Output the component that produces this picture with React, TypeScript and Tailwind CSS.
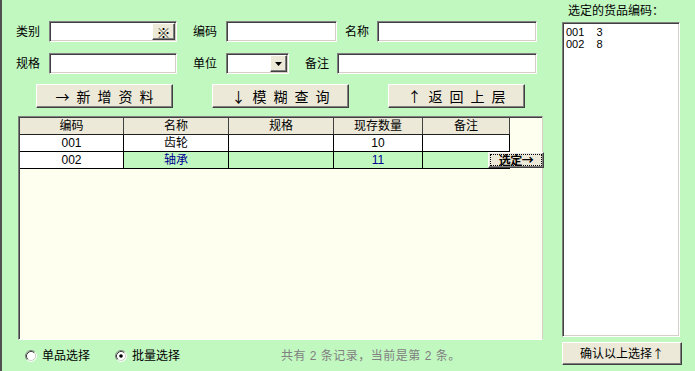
import React from "react";

const sunken =
  "border border-t-[#808080] border-l-[#808080] border-r-white border-b-white shadow-[inset_1px_1px_0_#404040,inset_-1px_-1px_0_#d4d0c8] bg-white";
const raised =
  "border border-t-white border-l-white border-r-[#404040] border-b-[#404040] shadow-[inset_-1px_-1px_0_#808080,inset_1px_1px_0_#ece9d8] bg-[#ece9d8]";
const cjk = "font-['Noto_Sans_CJK_SC',sans-serif]";

function Radio({ checked }: { checked?: boolean }) {
  return (
    <svg width="12" height="12" viewBox="0 0 12 12" className="shrink-0">
      <circle cx="6" cy="6" r="4.5" fill="white" />
      <path d="M2.11 9.89 A5.5 5.5 0 0 1 9.89 2.11" fill="none" stroke="#808080" />
      <path d="M9.89 2.11 A5.5 5.5 0 0 1 2.11 9.89" fill="none" stroke="#ffffff" />
      <path d="M2.82 9.18 A4.5 4.5 0 0 1 9.18 2.82" fill="none" stroke="#404040" />
      <path d="M9.18 2.82 A4.5 4.5 0 0 1 2.82 9.18" fill="none" stroke="#d4d0c8" />
      {checked && <circle cx="6" cy="6" r="1.8" fill="black" />}
    </svg>
  );
}

function BigButton({ chars, w }: { chars: string[]; w: string }) {
  return (
    <div className={`${raised} ${w} h-[24px] flex items-center justify-center gap-[7px] text-[14px] text-black ${cjk}`}>
      {chars.map((c, i) => (
        <span key={i} className="leading-none">
          {c}
        </span>
      ))}
    </div>
  );
}

const cols = [
  { name: "编码", w: "w-[104px]" },
  { name: "名称", w: "w-[105px]" },
  { name: "规格", w: "w-[105px]" },
  { name: "现存数量", w: "w-[89px]" },
  { name: "备注", w: "w-[87px]" },
];

const rows = [
  { cells: ["001", "齿轮", "", "10", ""], sel: false },
  { cells: ["002", "轴承", "", "11", ""], sel: true },
];

export default function App() {
  return (
    <div className="w-[695px] h-[371px] bg-[#c0f8c0] border-l-2 border-[#505050] flex text-[12px] text-black font-['Liberation_Sans','Noto_Sans_CJK_SC',sans-serif] overflow-hidden">
      {/* left column */}
      <div className="w-[560px] flex flex-col pt-[21px]">
        {/* row 1 */}
        <div className="flex items-center h-[21px] pl-[14px]">
          <span className="w-[33px]">类别</span>
          <div className={`${sunken} w-[128px] h-[21px] flex justify-end items-stretch p-[1px]`}>
            <div className={`${raised} w-[23px] flex items-center justify-center text-[14px] leading-none ${cjk}`}>※</div>
          </div>
          <span className="ml-[16px] w-[33px]">编码</span>
          <div className={`${sunken} w-[111px] h-[21px]`} />
          <span className="ml-[8px] w-[32px]">名称</span>
          <div className={`${sunken} w-[160px] h-[21px]`} />
        </div>
        {/* row 2 */}
        <div className="flex items-center h-[21px] pl-[14px] mt-[11px]">
          <span className="w-[33px]">规格</span>
          <div className={`${sunken} w-[128px] h-[21px]`} />
          <span className="ml-[16px] w-[33px]">单位</span>
          <div className={`${sunken} w-[63px] h-[21px] flex justify-end items-stretch p-[1px]`}>
            <div className={`${raised} w-[17px] flex items-center justify-center`}>
              <svg width="7" height="4" viewBox="0 0 7 4">
                <path d="M0 0 H7 L3.5 4 Z" fill="black" />
              </svg>
            </div>
          </div>
          <span className="ml-[16px] w-[32px]">备注</span>
          <div className={`${sunken} w-[200px] h-[21px]`} />
        </div>
        {/* row 3 buttons */}
        <div className="flex items-center mt-[10px] pl-[34px] gap-[39px]">
          <BigButton chars={["→", "新", "增", "资", "料"]} w="w-[137px]" />
          <BigButton chars={["↓", "模", "糊", "查", "询"]} w="w-[137px]" />
          <BigButton chars={["↑", "返", "回", "上", "层"]} w="w-[137px]" />
        </div>
        {/* grid */}
        <div className="relative mt-[8px] ml-[16px] w-[525px] h-[224px] bg-[#fffff0] border border-t-[#808080] border-l-[#808080] border-r-[#d4d0c8] border-b-white shadow-[inset_1px_1px_0_#404040] pt-[1px] pl-[1px]">
          <div className="flex h-[17px] w-[490px] bg-[#ece9d8] border-b border-[#202020]">
            {cols.map((c, i) => (
              <div key={i} className={`${c.w} border-r border-[#404040] flex items-center justify-center leading-none`}>
                {c.name}
              </div>
            ))}
          </div>
          {rows.map((r, ri) => (
            <div key={ri} className="flex h-[17px] border-b border-black w-[490px]">
              {r.cells.map((v, ci) => {
                const green = r.sel && ci > 0;
                return (
                  <div
                    key={ci}
                    className={`${cols[ci].w} border-r border-black flex items-center justify-center leading-none ${green ? "bg-[#c0f8c0] text-[#000090]" : "bg-white text-black"}`}
                  >
                    {v}
                  </div>
                );
              })}
            </div>
          ))}
          <div className={`absolute left-[469px] top-[35px] w-[56px] h-[16px] ${raised} flex items-center justify-center p-[1px]`}>
            <div className={`w-full h-full border border-dotted border-black flex items-center justify-center font-bold leading-none whitespace-nowrap text-[12px] tracking-[-0.5px] ${cjk}`}>
              选定→
            </div>
          </div>
        </div>
        {/* bottom row */}
        <div className="flex items-center h-[31px] pl-[23px]">
          <Radio />
          <span className="ml-[5px]">单品选择</span>
          <div className="ml-[25px]">
            <Radio checked />
          </div>
          <span className="ml-[5px]">批量选择</span>
          <span className="ml-[101px] text-[#808080] whitespace-pre tracking-[0.5px]">共有 2 条记录，当前是第 2 条。</span>
        </div>
      </div>
      {/* right column */}
      <div className="w-[120px] flex flex-col">
        <div className="h-[22px] pl-[6px] pt-[4px] leading-[14px]">选定的货品编码：</div>
        <div className={`${sunken} w-[118px] h-[315px] pl-[3px] pt-[3px] text-[11px] leading-[12px] whitespace-pre`}>
          <div>001    3</div>
          <div>002    8</div>
        </div>
        <div className={`${raised} mt-[5px] w-[120px] h-[23px] flex items-center justify-center leading-none`}>
          确认以上选择<span className={cjk}>↑</span>
        </div>
      </div>
    </div>
  );
}
